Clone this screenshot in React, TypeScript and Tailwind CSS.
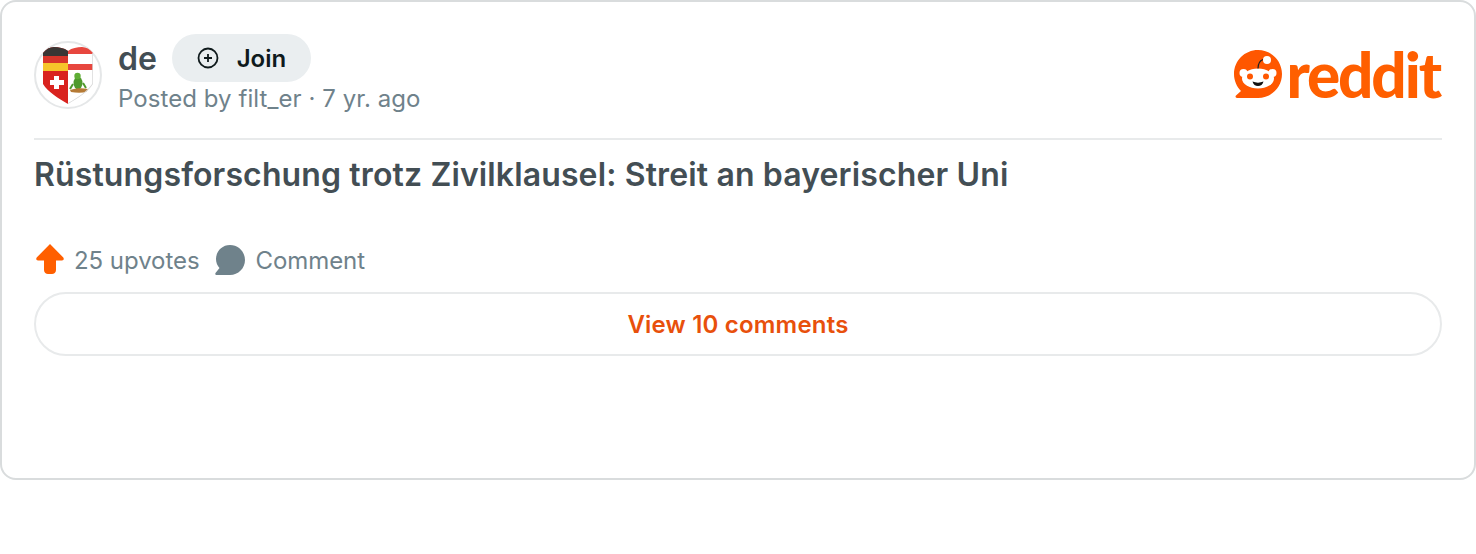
import React from "react";

function Avatar() {
  return (
    <div className="w-[68px] h-[68px] rounded-full border-2 border-[#e5e7e8] flex items-center justify-center shrink-0 bg-white">
      <svg width="50" height="58" viewBox="0 0 50 58" className="shrink-0">
        <defs>
          <clipPath id="shield">
            <path d="M0 7C3 3 7 1 11 1C16 1 21 2 25 5C29 2 34 1 39 1C43 1 47 3 50 7V38C45 46 35 52 25 58C15 52 5 46 0 38Z" />
          </clipPath>
        </defs>
        <g clipPath="url(#shield)">
          <rect x="0" y="0" width="25" height="58" fill="#d9231f" />
          <rect x="25" y="0" width="25" height="58" fill="#fff" />
          <rect x="0" y="0" width="25" height="10" fill="#3a3634" />
          <rect x="0" y="10" width="25" height="7" fill="#d8352a" />
          <rect x="0" y="17" width="25" height="8" fill="#f6c52a" />
          <rect x="25" y="0" width="25" height="8" fill="#e7463e" />
          <rect x="25" y="18" width="25" height="6" fill="#e7463e" />
          <path d="M11 30h5v4h5v5h-5v4h-5v-4H7v-5h4z" fill="#fff" />
          <ellipse cx="35" cy="37" rx="4.500" ry="6.500" fill="#4f9a2c" />
          <circle cx="34.500" cy="30" r="3.200" fill="#5fae35" />
          <path d="M30 38l-3 5M40 37l3 5" stroke="#4f9a2c" strokeWidth="2" />
          <path d="M27 44c6-2 12-2 18-1l-1 3c-5 1-11 1-16 0z" fill="#b57a35" />
          <path d="M50 7V38C45 46 35 52 25 58" stroke="#d8d8d8" strokeWidth="1.500" fill="none" />
        </g>
      </svg>
    </div>
  );
}

function RedditMark() {
  return (
    <svg width="48" height="48" viewBox="0 0 48 48" className="shrink-0">
      <path d="M24 0C10.700 0 0 10.700 0 24c0 6.600 2.700 12.600 7 17L2 45.500C1 46.500 1.700 48 3 48H24c13.300 0 24-10.700 24-24S37.300 0 24 0Z" fill="#ff5700" />
      <ellipse cx="24" cy="28.500" rx="16" ry="10" fill="#fff" />
      <circle cx="9.500" cy="23" r="4" fill="#fff" />
      <circle cx="38.500" cy="23" r="4" fill="#fff" />
      <circle cx="16" cy="26.500" r="3" fill="#ff5700" />
      <circle cx="32" cy="26.500" r="3" fill="#ff5700" />
      <path d="M18.500 31.500c3.500 1.500 7.500 1.500 11 0-.8 3-2.800 4.500-5.500 4.500s-4.700-1.500-5.500-4.500Z" fill="#111" />
      <path d="M24 18.500c0-4 1-7.500 5-9" stroke="#222" strokeWidth="1.300" fill="none" />
      <circle cx="33" cy="10" r="4" fill="#fff" />
    </svg>
  );
}

export default function App() {
  return (
    <div className="w-[1476px] h-[554px] bg-white" style={{ fontFamily: "Inter, sans-serif" }}>
      <div className="h-[480px] border-2 border-[#d9dcdd] rounded-[16px] px-[32px] pt-[32px]">
        <div className="flex justify-between items-start h-[106px] border-b-2 border-[#e8eaeb]">
          <div className="flex items-center gap-4">
            <Avatar />
            <div className="flex flex-col">
              <div className="flex items-center gap-[15px] h-[48px]">
                <span className="text-[32px] leading-[48px] pt-[2px] font-semibold text-[#434e54]">de</span>
                <div className="flex items-center justify-center gap-[18px] h-[48px] w-[139px] rounded-full bg-[#eaeef0]">
                  <svg width="22" height="22" viewBox="0 0 22 22" fill="none" stroke="#0f1a1c" strokeWidth="1.800">
                    <circle cx="11" cy="11" r="9.500" />
                    <path d="M7 11h8M11 7v8" />
                  </svg>
                  <span className="text-[24px] leading-[30px] pt-[2px] font-semibold text-[#0f1a1c]">Join</span>
                </div>
              </div>
              <span className="text-[24px] leading-[32px] pt-[1px] tracking-[0.07px] text-[#6f828b]">Posted by filt_er · 7 yr. ago</span>
            </div>
          </div>
          <div className="flex items-center gap-[4px] pt-[16px] pr-[2px]">
            <RedditMark />
            <span className="text-[62px] leading-[48px] font-black tracking-[-2.100px] text-[#ff5f00]" style={{ fontFamily: "Lato, sans-serif" }}>reddit</span>
          </div>
        </div>
        <h1 className="text-[32px] leading-[40px] tracking-[0.13px] font-semibold text-[#434e54] mt-[15px]">Rüstungsforschung trotz Zivilklausel: Streit an bayerischer Uni</h1>
        <div className="flex items-center mt-[50px] h-[32px]">
          <svg width="28" height="30" viewBox="0 0 28 30" fill="#ff5f00" className="ml-[2px] mb-[4px]">
            <path d="M14 0 .7 13.500C-.3 14.800.4 16.500 2 16.500H8V26c0 2.500 2 4 4 4h4c2 0 4-1.500 4-4V16.500h6c1.600 0 2.300-1.700 1.300-3Z" />
          </svg>
          <span className="text-[24px] leading-[32px] tracking-[-0.05px] text-[#6f828b] ml-[10px]">25 upvotes</span>
          <svg width="30" height="30" viewBox="0 0 30 30" fill="#6f828b" className="ml-[15px] mb-[2px]">
            <path d="M15 0C6.700 0 1 6.700 1 14c0 3.500 1.300 6.500 3.500 9L.5 28c-.5.800 0 2 1 2H15c8.300 0 15-6.700 15-15S23.300 0 15 0Z" />
          </svg>
          <span className="text-[24px] leading-[32px] tracking-[-0.1px] text-[#6f828b] ml-[11px]">Comment</span>
        </div>
        <div className="mt-[15px] h-[64px] rounded-full border-2 border-[#e8eaeb] flex items-center justify-center">
          <span className="text-[24px] leading-[32px] pt-[1px] tracking-[0.2px] font-semibold text-[#e8500c]">View 10 comments</span>
        </div>
      </div>
    </div>
  );
}
